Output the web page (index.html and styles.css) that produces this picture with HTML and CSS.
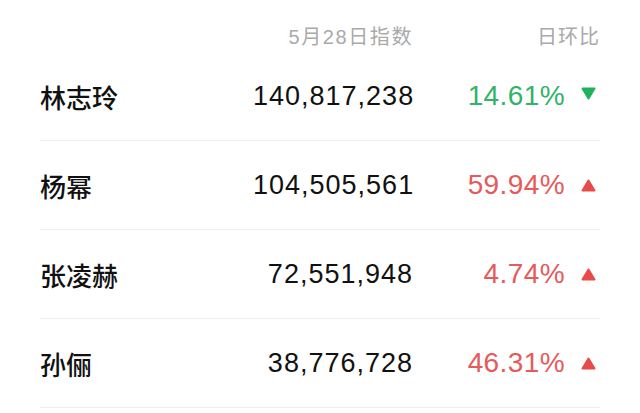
FILE: index.html
```html
<!DOCTYPE html>
<html lang="zh-CN">
  <head>
    <meta charset="UTF-8" />
    <title>指数排行</title>
    <link rel="stylesheet" href="styles.css">
  </head>
  <body>
    <div class="table">
      <div class="row head">
        <span></span>
        <span class="num">5月28日指数</span>
        <span class="ratio-head">日环比</span>
      </div>

      <div class="row">
        <span class="name">林志玲</span>
        <span class="num">140,817,238</span>
        <span class="pct down">14.61%</span>
        <svg class="tri tri-down" width="15" height="13" viewBox="0 0 15 13">
          <path d="M1.5 1.5 L13.5 1.5 L7.5 11.5 Z" />
        </svg>
      </div>

      <div class="row">
        <span class="name">杨幂</span>
        <span class="num">104,505,561</span>
        <span class="pct up">59.94%</span>
        <svg class="tri tri-up" width="15" height="13" viewBox="0 0 15 13">
          <path d="M7.5 1.5 L13.5 11.5 L1.5 11.5 Z" />
        </svg>
      </div>

      <div class="row">
        <span class="name">张凌赫</span>
        <span class="num">72,551,948</span>
        <span class="pct up">4.74%</span>
        <svg class="tri tri-up" width="15" height="13" viewBox="0 0 15 13">
          <path d="M7.5 1.5 L13.5 11.5 L1.5 11.5 Z" />
        </svg>
      </div>

      <div class="row">
        <span class="name">孙俪</span>
        <span class="num">38,776,728</span>
        <span class="pct up">46.31%</span>
        <svg class="tri tri-up" width="15" height="13" viewBox="0 0 15 13">
          <path d="M7.5 1.5 L13.5 11.5 L1.5 11.5 Z" />
        </svg>
      </div>
    </div>
  </body>
</html>
```

FILE: styles.css
```css
* {
  margin: 0;
  padding: 0;
  box-sizing: border-box;
}

body {
  font-family: "Liberation Sans", "Noto Sans CJK SC", sans-serif;
  background: #fff;
  color: #111;
}

.table {
  width: 560px;
  margin-left: 40px;
}

/* name | index | ratio | arrow */
.row {
  display: grid;
  grid-template-columns: 1fr 160px 152px 35px;
  align-items: center;
  height: 89px;
  border-bottom: 1px solid #eeeeee;
}

.row.head {
  height: 52px;
  border-bottom: none;
  padding-top: 18px;
  color: #aaaaaa;
  font-size: 20px;
  letter-spacing: 1px;
}

.name {
  font-size: 26px;
  font-weight: 500;
}

.num {
  text-align: right;
  font-size: 27px;
  letter-spacing: 1px;
}

.head .num {
  font-size: 20px;
  letter-spacing: 1.6px;
}

.ratio-head {
  grid-column: 3 / 5;
  text-align: right;
}

.pct {
  text-align: right;
  font-size: 28px;
  letter-spacing: 0.4px;
}

.pct.down {
  color: #33b26a;
}

.pct.up {
  color: #e55b5b;
}

.tri {
  justify-self: end;
  margin-right: 4px;
  stroke-width: 2;
  stroke-linejoin: round;
}

.tri-up {
  fill: #e84a4a;
  stroke: #e84a4a;
}

.tri-down {
  fill: #20b25c;
  stroke: #20b25c;
  margin-bottom: 6px;
}
```
